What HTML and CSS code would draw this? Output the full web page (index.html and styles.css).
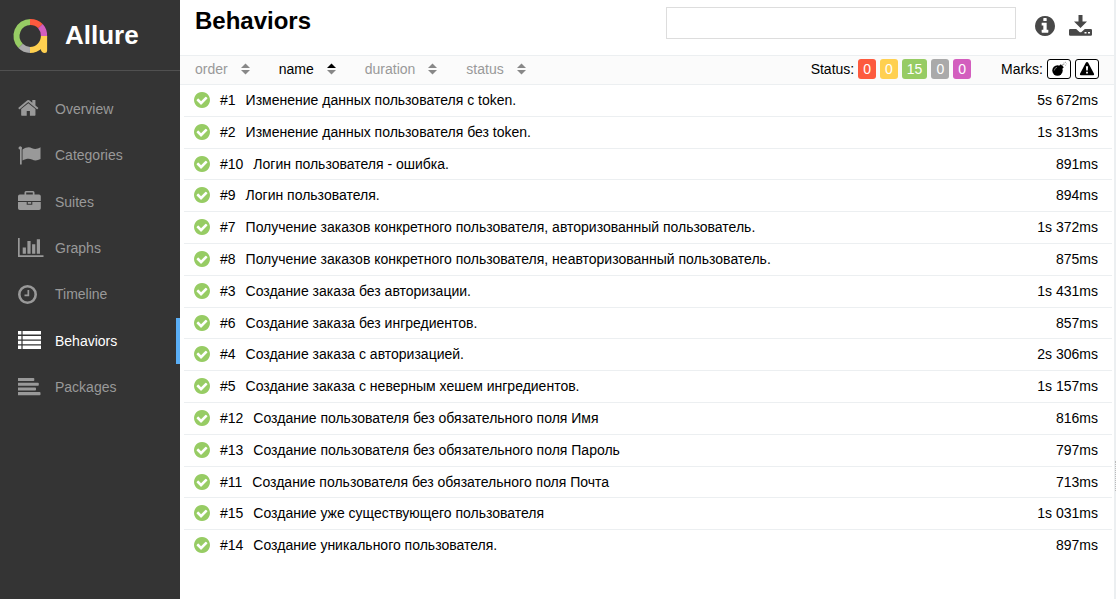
FILE: index.html
```html
<!DOCTYPE html>
<html lang="ru">
<head>
<meta charset="utf-8">
<title>Allure – Behaviors</title>
<link rel="stylesheet" href="styles.css">
</head>
<body>
<svg class="sprite" aria-hidden="true">
  <symbol id="passed" viewBox="128 128 1536 1536"><path d="M1412 734q0-28-18-46l-91-90q-19-19-45-19t-45 19l-408 407-226-226q-19-19-45-19t-45 19l-91 90q-18 18-18 46 0 27 18 45l362 362q19 19 45 19 27 0 46-19l543-543q18-18 18-45zm252 162q0 209-103 385.5t-279.5 279.5-385.5 103-385.5-103-279.5-279.5-103-385.5 103-385.5 279.5-279.5 385.5-103 385.5 103 279.5 279.5 103 385.5z"/></symbol>
  <symbol id="sort" viewBox="0 0 9 12"><path d="M4.500 .5L9 5H0z"/><path d="M0 7h9L4.500 11.500z"/></symbol>
</svg>
<div class="app">
  <aside class="side">
    <a class="brand" href="#">
      <svg class="logo" viewBox="0 0 36 36" fill="none" stroke-width="6.200">
        <path stroke="#97cc64" d="M8.600 27.900A14 14 0 0 1 18.500 4"/>
        <path stroke="#fd5a3e" d="M18 4A14 14 0 0 1 28.400 8.100"/>
        <path stroke="#d35ebe" d="M28.400 8.100A14 14 0 0 1 32 18"/>
        <path stroke="#aaa" d="M8.600 27.900A14 14 0 0 0 18 32"/>
        <path stroke="#ffd050" d="M18 32A14 14 0 0 0 32 18"/>
        <path fill="#ffd050" d="M29 18h6.100v14.500q0 2.500-2.500 2.500q-3 0-4-4z"/>
      </svg>
      <span>Allure</span>
    </a>
    <nav class="nav">
      <a class="nav-item" href="#"><svg viewBox="0 0 26 22"><path transform="translate(-.8 -1.200) scale(.0124)" d="M1472 992v480q0 26-19 45t-45 19h-384v-384h-256v384h-384q-26 0-45-19t-19-45v-480q0-1 .5-3t.5-3l575-474 575 474q1 2 1 6zm223-69l-62 74q-8 9-21 11h-3q-13 0-21-7l-692-577-692 577q-12 8-24 7-13-2-21-11l-62-74q-8-10-7-23.500t11-21.500l719-599q32-26 76-26t76 26l244 204v-195q0-14 9-23t23-9h192q14 0 23 9t9 23v408l219 182q10 8 11 21.500t-7 23.500z"/></svg><span>Overview</span></a>
      <a class="nav-item" href="#"><svg viewBox="0 0 26 22"><path d="M1 4.200A1.700 1.700 0 1 1 3.700 4V19.500H2V4.500zM4.500 4.500C8 2.500 11 1.500 14 3.300C17 4.600 19.500 4 22.500 2.300V14C19.500 15.500 17 16 14 14.500C11 13 8 13.600 4.500 15.500z"/></svg><span>Categories</span></a>
      <a class="nav-item" href="#"><svg viewBox="0 0 26 22"><path fill-rule="evenodd" d="M6.500 3.500V1.500Q6.500 0 8 0h7q1.500 0 1.500 1.500v2H21q1.800 0 1.800 1.800V10H0V5.300Q0 3.500 1.800 3.500zM8.200 3.500h6.600V1.600H8.200zM0 11h8.700v2.700h5.600V11h8.500v6.200q0 1.800-1.800 1.800H1.800Q0 19 0 17.200zM9.800 11h3.400v1.700H9.800z"/></svg><span>Suites</span></a>
      <a class="nav-item" href="#"><svg viewBox="0 0 26 22"><path d="M0 1h1.700v17.300H25.500V20H0zM4.700 10.500h3.200v6.300H4.700zM9.400 4h3.200v12.800H9.400zM14.100 7.200h3.200v9.600h-3.200zM18.800 2.300H22v14.500h-3.200z"/></svg><span>Graphs</span></a>
      <a class="nav-item" href="#"><svg viewBox="0 0 26 22"><circle cx="9.500" cy="10.500" r="8.200" fill="none" stroke="currentColor" stroke-width="2.600"/><path d="M9.500 6h1.700v6.300H6.500v-1.700h3z"/></svg><span>Timeline</span></a>
      <a class="nav-item active" href="#"><svg viewBox="0 0 26 22"><path d="M0 1h3.400v3.500H0zM4.600 1H23v3.500H4.600zM0 5.900h3.400v3.500H0zM4.600 5.900H23v3.500H4.600zM0 10.700h3.400v3.500H0zM4.600 10.700H23v3.500H4.600zM0 15.500h3.400V19H0zM4.600 15.500H23V19H4.600z"/></svg><span>Behaviors</span></a>
      <a class="nav-item" href="#"><svg viewBox="0 0 26 22"><path d="M0 1h15.500q.8 0 .8.800v1.500q0 .8-.8.800H0zM0 5.700h20q.8 0 .8.800V8q0 .8-.8.800H0zM0 10.400h17.200q.8 0 .8.800v1.500q0 .8-.8.800H0zM0 15.100h21.700q.8 0 .8.800v1.500q0 .8-.8.800H0z"/></svg><span>Packages</span></a>
    </nav>
  </aside>
  <main class="pane">
    <header class="head">
      <h1>Behaviors</h1>
      <input class="search" type="text" aria-label="Search">
      <div class="tools">
        <button type="button" aria-label="Info"><svg class="info" viewBox="128 128 1536 1536"><path d="M1152 1376v-160q0-14-9-23t-23-9h-96v-512q0-14-9-23t-23-9h-320q-14 0-23 9t-9 23v160q0 14 9 23t23 9h96v320h-96q-14 0-23 9t-9 23v160q0 14 9 23t23 9h448q14 0 23-9t9-23zm-128-896v-160q0-14-9-23t-23-9h-192q-14 0-23 9t-9 23v160q0 14 9 23t23 9h192q14 0 23-9t9-23zm640 416q0 209-103 385.500t-279.500 279.500-385.500 103-385.500-103-279.500-279.500-103-385.500 103-385.500 279.500-279.500 385.500-103 385.500 103 279.500 279.500 103 385.500z"/></svg></button>
        <button type="button" aria-label="Download"><svg class="download" viewBox="0 0 23 24"><path fill-rule="evenodd" d="M9.500 1h4v6.500H18L11.500 14 5 7.500h4.500zM1.200 15h6l3 2.700q1.300 1 2.600 0l3-2.700h6q1.200 0 1.200 1.200v4.300q0 1.200-1.200 1.200H1.200Q0 21.700 0 20.500v-4.300Q0 15 1.200 15zM15.500 18v1.600h2V18zM19 18v1.600h2V18z"/></svg></button>
      </div>
    </header>
    <div class="bar">
      <div class="sorters">
        <button type="button" class="sorter">order<svg><use href="#sort"/></svg></button>
        <button type="button" class="sorter sorted">name<svg viewBox="0 0 9 12"><path class="asc" d="M4.500 .5L9 5H0z"/><path d="M0 7h9L4.500 11.500z"/></svg></button>
        <button type="button" class="sorter">duration<svg><use href="#sort"/></svg></button>
        <button type="button" class="sorter">status<svg><use href="#sort"/></svg></button>
      </div>
      <div class="filters">
        <div class="group"><span>Status:</span>
          <button type="button" class="badge failed">0</button>
          <button type="button" class="badge broken">0</button>
          <button type="button" class="badge ok">15</button>
          <button type="button" class="badge skipped">0</button>
          <button type="button" class="badge unknown">0</button>
        </div>
        <div class="group"><span>Marks:</span>
          <button type="button" class="mark" aria-label="Flaky"><svg viewBox="0 0 16 16"><circle cx="6.500" cy="9.500" r="5.200"/><path d="M8 5L9.800 3.200 12.800 6.200 11 8z"/><path d="M11 5Q11.500 2.500 13.500 3" fill="none" stroke="#777" stroke-width=".8"/><path d="M3.300 9.500Q3.500 6.800 6 6.300" fill="none" stroke="#999" stroke-width=".8"/><path d="M14.500 .8v1.200M14.500 3.800v1M12.800 1.300l.6.600M15.300 2.800h.7" stroke="#999" stroke-width=".7"/></svg></button>
          <button type="button" class="mark" aria-label="Warning"><svg viewBox="0 0 16 16"><path fill-rule="evenodd" d="M8 1Q8.800 1 9.200 1.700L15 12.800Q15.500 14 14.300 14.300H1.700Q.5 14 1 12.800L6.800 1.700Q7.200 1 8 1zM6.900 5.300L7.200 9.500H8.800L9.100 5.300zM7.100 10.700V12.500H8.900V10.700z"/></svg></button>
        </div>
      </div>
    </div>
    <ul class="list">
      <li><svg><use href="#passed"/></svg><span>#1</span><a href="#">Изменение данных пользователя с token.</a><time>5s 672ms</time></li>
      <li><svg><use href="#passed"/></svg><span>#2</span><a href="#">Изменение данных пользователя без token.</a><time>1s 313ms</time></li>
      <li><svg><use href="#passed"/></svg><span>#10</span><a href="#">Логин пользователя - ошибка.</a><time>891ms</time></li>
      <li><svg><use href="#passed"/></svg><span>#9</span><a href="#">Логин пользователя.</a><time>894ms</time></li>
      <li><svg><use href="#passed"/></svg><span>#7</span><a href="#">Получение заказов конкретного пользователя, авторизованный пользователь.</a><time>1s 372ms</time></li>
      <li><svg><use href="#passed"/></svg><span>#8</span><a href="#">Получение заказов конкретного пользователя, неавторизованный пользователь.</a><time>875ms</time></li>
      <li><svg><use href="#passed"/></svg><span>#3</span><a href="#">Создание заказа без авторизации.</a><time>1s 431ms</time></li>
      <li><svg><use href="#passed"/></svg><span>#6</span><a href="#">Создание заказа без ингредиентов.</a><time>857ms</time></li>
      <li><svg><use href="#passed"/></svg><span>#4</span><a href="#">Создание заказа с авторизацией.</a><time>2s 306ms</time></li>
      <li><svg><use href="#passed"/></svg><span>#5</span><a href="#">Создание заказа с неверным хешем ингредиентов.</a><time>1s 157ms</time></li>
      <li><svg><use href="#passed"/></svg><span>#12</span><a href="#">Создание пользователя без обязательного поля Имя</a><time>816ms</time></li>
      <li><svg><use href="#passed"/></svg><span>#13</span><a href="#">Создание пользователя без обязательного поля Пароль</a><time>797ms</time></li>
      <li><svg><use href="#passed"/></svg><span>#11</span><a href="#">Создание пользователя без обязательного поля Почта</a><time>713ms</time></li>
      <li><svg><use href="#passed"/></svg><span>#15</span><a href="#">Создание уже существующего пользователя</a><time>1s 031ms</time></li>
      <li><svg><use href="#passed"/></svg><span>#14</span><a href="#">Создание уникального пользователя.</a><time>897ms</time></li>
    </ul>
  </main>
  <div class="gutter"></div>
</div>
</body>
</html>
```

FILE: styles.css
```css
* {
  box-sizing: border-box;
}

body {
  margin: 0;
  font: 14px/1.2 "Liberation Sans", Arial, sans-serif;
  color: #000;
  background: #fff;
}

a {
  color: inherit;
  text-decoration: none;
}

button {
  padding: 0;
  border: 0;
  background: none;
  font: inherit;
  color: inherit;
  cursor: pointer;
}

svg {
  display: block;
  flex: none;
  fill: currentColor;
}

.sprite {
  position: absolute;
  width: 0;
  height: 0;
}

.app {
  display: flex;
  min-height: 100vh;
}

/* Sidebar */
.side {
  flex: none;
  width: 180px;
  background: #343434;
}

.brand {
  display: flex;
  align-items: center;
  gap: 17px;
  height: 71px;
  padding: 1px 0 0 12px;
  border-bottom: 1px solid #505050;
  color: #fff;
  font-size: 26px;
  font-weight: bold;
}

.logo {
  width: 36px;
  height: 36px;
  fill: none;
}

.nav {
  padding-top: 15px;
}

.nav-item {
  display: flex;
  align-items: center;
  gap: 11px;
  padding: 10px 0 10px 18px;
  border-right: 4px solid transparent;
  color: #999;
}

.nav-item svg {
  width: 26px;
  height: 22px;
}

.nav-item::after {
  content: "";
  height: 1.2em;
  font-size: 22px;
}

.nav-item.active {
  color: #fff;
  border-right-color: #5aaef5;
}

/* Main pane */
.pane {
  flex: 1;
  min-width: 0;
}

.head {
  display: flex;
  height: 55px;
  padding: 7px 22px 0 15px;
}

.head h1 {
  flex: 1;
  margin: 0;
  font-size: 24px;
}

.search {
  width: 350px;
  height: 32px;
  padding: 0 8px;
  border: 1px solid #ddd;
  font: inherit;
}

.tools {
  display: flex;
  align-items: center;
  gap: 14px;
  height: 38px;
  margin-left: 19px;
  color: #484848;
}

.info {
  width: 20px;
  height: 20px;
}

.download {
  width: 23px;
  height: 24px;
}

.bar {
  display: flex;
  align-items: center;
  justify-content: space-between;
  height: 30px;
  padding: 0 15px 2px;
  border: solid #eceff1;
  border-width: 1px 0;
  background: #fbfbfb;
}

.sorters {
  display: flex;
  gap: 29px;
}

.sorter {
  display: flex;
  align-items: center;
  gap: 13px;
  color: #999;
}

.sorter svg {
  width: 9px;
  height: 12px;
  fill: #888;
}

.sorter.sorted {
  color: #000;
}

.asc {
  fill: #000;
}

.filters {
  display: flex;
  gap: 30px;
}

.group {
  display: flex;
  align-items: center;
  gap: 4px;
}

.badge {
  height: 20px;
  padding: 0 5px;
  border-radius: 3px;
  color: #fff;
}

.failed { background: #fd5a3e; }
.broken { background: #ffd050; }
.ok { background: #97cc64; }
.skipped { background: #aaa; }
.unknown { background: #d35ebe; }

.mark {
  display: flex;
  align-items: center;
  justify-content: center;
  width: 24px;
  height: 20px;
  border: 1px solid #000;
  border-radius: 3px;
  background: #fff;
}

.mark svg {
  width: 16px;
  height: 16px;
}

.list {
  margin: 0;
  padding: 0 2px 0 4px;
  list-style: none;
}

.list li {
  display: flex;
  gap: 10px;
  padding: 7px 14px 7px 10px;
  border-bottom: 1px solid #eceff1;
}

.list li:last-child {
  border-bottom: 0;
}

.list svg {
  width: 16px;
  height: 16px;
  fill: #97cc64;
}

.list a {
  flex: 1;
}

.gutter {
  flex: none;
  width: 2px;
  padding-top: 461px;
  background: #eceff1;
}

.gutter::before {
  content: "";
  display: block;
  height: 30px;
  border-right: 1px dotted #bbb;
}
```
